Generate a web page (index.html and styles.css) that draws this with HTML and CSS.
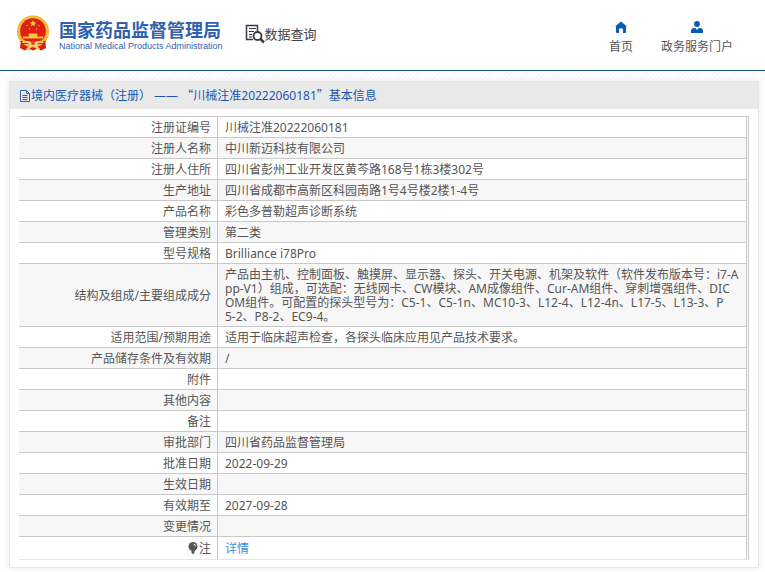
FILE: index.html
```html
<!DOCTYPE html>
<html lang="zh-CN">
<head>
<meta charset="utf-8">
<meta name="viewport" content="width=device-width, initial-scale=1">
<title>国家药品监督管理局 数据查询</title>
<link rel="stylesheet" href="styles.css">
</head>
<body>
<header class="top">
  <a class="brand" href="#">
    <svg class="emblem" viewBox="0 0 34 36" aria-hidden="true">
      <path d="M5 24 4 33l5 2.500 3-2 5 2 5-2 3 2 5-2.500-1-9z" fill="#d81e12"/>
      <circle cx="17" cy="16.500" r="16" fill="#eeb02c"/>
      <circle cx="17" cy="16.500" r="14.500" fill="none" stroke="#f9d66c" stroke-width="1" stroke-dasharray="2 1.500"/>
      <circle cx="17" cy="16" r="12.800" fill="#df1f14"/>
      <path d="m17 5 .9 2.300 2.500.1-2 1.500.7 2.400-2.100-1.400-2.100 1.400.7-2.400-2-1.500 2.500-.1z" fill="#fbd44a"/>
      <g fill="#f5b53c"><circle cx="11" cy="10.500" r=".8"/><circle cx="23" cy="10.500" r=".8"/><circle cx="13.500" cy="14" r=".8"/><circle cx="20.500" cy="14" r=".8"/></g>
      <path d="M13 18.500h8l1 1.500h-1v1.500h6v2H7v-2h6V20h-1z" fill="#f8c63b"/>
      <path d="M4 26h26l-2 3H6z" fill="#df1f14"/>
      <path d="M7 26q5-1 10 2 5-3 10-2l1 2q-6-1-8 2l4 4-2 1-5-4-5 4-2-1 4-4q-2-3-8-2z" fill="#f7cf78"/>
      <circle cx="17" cy="28" r="2" fill="#e9402c"/>
    </svg>
    <span class="brand-text">
      <span class="brand-cn">国家药品监督管理局</span>
      <span class="brand-en">National Medical Products Administration</span>
    </span>
  </a>
  <a class="query" href="#">
    <svg class="query-icon" viewBox="0 0 20 20" aria-hidden="true" fill="none" stroke="#363a45">
      <path d="M12.500 7V1.500h-11v14H8" stroke-width="1.500"/>
      <path d="M4 4.500h7M4 7.500h5M4 10.500h3M4 13h3" stroke-width="1.200"/>
      <circle cx="12.500" cy="12" r="4" stroke-width="1.800"/>
      <path d="m15.500 15 3.500 3.500" stroke-width="2.500"/>
    </svg>
    <span>数据查询</span>
  </a>
  <nav class="nav">
    <a href="#">
      <svg viewBox="0 0 12 12" aria-hidden="true"><path d="M6 .5 0 5.500h1V11a1 1 0 0 0 1 1h2V7.500h4V12h2a1 1 0 0 0 1-1V5.500h1z" fill="#0d59b8"/></svg>
      <span>首页</span>
    </a>
    <a href="#">
      <svg viewBox="0 0 12 12" aria-hidden="true"><circle cx="6" cy="3" r="2.900" fill="#0d59b8"/><path d="M0 12V9.500Q.5 7 4 6.800l2 2.200 2-2.200q3.500.2 4 2.700V12z" fill="#0d59b8"/></svg>
      <span>政务服务门户</span>
    </a>
  </nav>
</header>
<main class="page">
  <section class="panel">
    <h1 class="panel-title">
      <svg class="doc-icon" viewBox="0 0 10 12" aria-hidden="true" fill="none" stroke="#2b62b5"><path d="M.5.5h6l3 3v8h-9zM6.500.5v3h3M2.500 5.500h5M2.500 7.500h5M2.500 9.500h5"/></svg>
      <span>境内医疗器械（注册） —— <span class="quote">“</span>川械注准20222060181<span class="quote">”</span>基本信息</span>
    </h1>
    <div class="panel-body">
      <table class="info">
        <tbody>
          <tr><th scope="row">注册证编号</th><td>川械注准20222060181</td></tr>
          <tr><th scope="row">注册人名称</th><td>中川新迈科技有限公司</td></tr>
          <tr><th scope="row">注册人住所</th><td>四川省彭州工业开发区黄芩路168号1栋3楼302号</td></tr>
          <tr><th scope="row">生产地址</th><td>四川省成都市高新区科园南路1号4号楼2楼1-4号</td></tr>
          <tr><th scope="row">产品名称</th><td>彩色多普勒超声诊断系统</td></tr>
          <tr><th scope="row">管理类别</th><td>第二类</td></tr>
          <tr><th scope="row">型号规格</th><td>Brilliance i78Pro</td></tr>
          <tr><th scope="row">结构及组成/主要组成成分</th><td>产品由主机、控制面板、触摸屏、显示器、探头、开关电源、机架及软件（软件发布版本号：i7-A<br>pp-V1）组成，可选配：无线网卡、CW模块、AM成像组件、Cur-AM组件、穿刺增强组件、DIC<br>OM组件。可配置的探头型号为：C5-1、C5-1n、MC10-3、L12-4、L12-4n、L17-5、L13-3、P<br>5-2、P8-2、EC9-4。</td></tr>
          <tr><th scope="row">适用范围/预期用途</th><td>适用于临床超声检查，各探头临床应用见产品技术要求。</td></tr>
          <tr><th scope="row">产品储存条件及有效期</th><td>/</td></tr>
          <tr><th scope="row">附件</th><td></td></tr>
          <tr><th scope="row">其他内容</th><td></td></tr>
          <tr><th scope="row">备注</th><td></td></tr>
          <tr><th scope="row">审批部门</th><td>四川省药品监督管理局</td></tr>
          <tr><th scope="row">批准日期</th><td>2022-09-29</td></tr>
          <tr><th scope="row">生效日期</th><td></td></tr>
          <tr><th scope="row">有效期至</th><td>2027-09-28</td></tr>
          <tr><th scope="row">变更情况</th><td></td></tr>
          <tr class="note"><th scope="row"><svg class="bulb" viewBox="0 0 10 12" aria-hidden="true"><circle cx="5" cy="4.500" r="4.500" fill="#555"/><path d="M3.500 8h3v2.500L5.500 12h-1l-1-1.500z" fill="#555"/><path d="M5.500 2q2 .3 2 2.300" fill="none" stroke="#fff"/></svg>注</th><td><a class="detail" href="#">详情</a></td></tr>
        </tbody>
      </table>
    </div>
  </section>
</main>
</body>
</html>
```
FILE: styles.css
```css
* { box-sizing: border-box; }

body {
  margin: 0;
  background: #fff;
  color: #555;
  font: 12px/14px "Noto Sans", "Noto Sans CJK SC", sans-serif;
}

a { color: inherit; text-decoration: none; }
svg { display: block; flex: none; }

.top {
  display: flex;
  align-items: flex-start;
  height: 71px;
  padding: 0 32px 0 16px;
  border-bottom: 1px solid #1a4e98;
}

.brand { display: flex; gap: 9px; padding-top: 15px; }
.emblem { width: 34px; height: 36px; }
.brand-text { display: flex; flex-direction: column; padding-top: 4px; color: #2f5fae; white-space: nowrap; }
.brand-cn { font: bold 18px/20px "Noto Sans CJK SC", sans-serif; }
.brand-en { font: 9px/14px "Liberation Sans", sans-serif; }

.query {
  display: flex;
  align-items: center;
  margin-left: 22px;
  padding-top: 24px;
  color: #444;
  font-size: 13px;
  line-height: 20px;
  white-space: nowrap;
}
.query-icon { width: 20px; height: 20px; }

.nav { display: flex; gap: 28px; margin-left: auto; padding-top: 21px; }
.nav a { display: flex; flex-direction: column; align-items: center; gap: 7px; }
.nav svg { width: 12px; height: 12px; }

.page {
  padding: 10px 6px 4px 9px;
  background: repeating-linear-gradient(135deg, #fff 0 2px, #f6f8fc 2px 3px) top / 100% 10px no-repeat;
}

.panel {
  border: 1px solid #e6e6e6;
  background: #fff;
  box-shadow: 0 0 6px #e8e8e8;
}

.panel-title {
  display: flex;
  align-items: center;
  height: 27px;
  margin: 0;
  padding-left: 10px;
  background: #e9e9e9;
  color: #1b57b0;
  font-size: 12px;
  font-weight: normal;
}
.doc-icon { width: 10px; height: 12px; margin-right: 1px; }
.quote { font-family: "Noto Sans CJK SC", sans-serif; }

.panel-body { padding: 7px 9px; }

.info {
  width: 100%;
  padding-right: 1px;
  border-spacing: 0;
  border-top: 1px solid #c8c8c8;
  border-right: 1px solid #c8c8c8;
  table-layout: fixed;
}
.info th,
.info td {
  height: 21px;
  padding: 4px 6px 2px;
  border-right: 1px solid #c8c8c8;
  border-bottom: 1px solid #c8c8c8;
  word-break: break-all;
}
.info th { width: 199px; font-weight: normal; text-align: right; }
.info td { padding-right: 4px; padding-left: 7px; }
.info tr:nth-child(even) { background: #f7f7f7; }
.info .note th,
.info .note td { height: 23px; border-bottom-color: #e6e6e6; }

.bulb { display: inline-block; width: 10px; height: 12px; margin-right: 1px; vertical-align: -1px; }
.detail { color: #3a8ee6; }
```
